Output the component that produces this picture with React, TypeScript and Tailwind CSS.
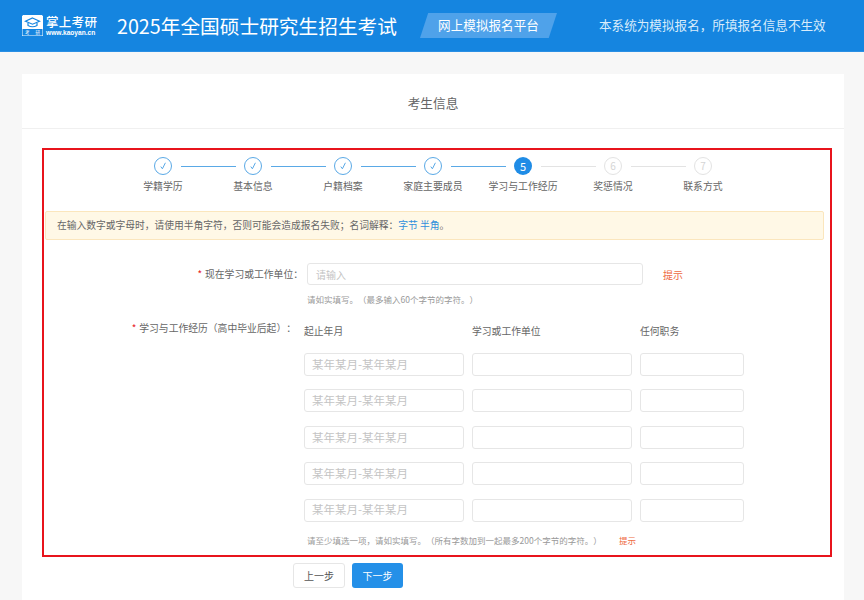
const steps = ["学籍学历", "基本信息", "户籍档案", "家庭主要成员", "学习与工作经历", "奖惩情况", "联系方式"];

function Logo() {
    return (
        <div className="flex items-center w-[75px] h-[22px]">
            <div className="relative w-[21px] h-[21px] shrink-0">
                <svg width="21" height="21" viewBox="0 0 21 21">
                    <path d="M3 0 H18 Q21 0 21 3 V20 Q21 21 20 21 H1 Q0 21 0 20 V3 Q0 0 3 0 Z" fill="none" stroke="#ffffff" strokeWidth="1" />
                    <path d="M3 0 H18 Q21 0 21 3 V14 H0 V3 Q0 0 3 0 Z" fill="#ffffff" />
                    <path d="M10.5 3 L17.5 6.2 L10.5 9.2 L3.5 6.2 Z" fill="none" stroke="#1585e0" strokeWidth="1.2" />
                    <path d="M6 8 V10.5 Q10.5 13 15 10.5 V8" fill="none" stroke="#1585e0" strokeWidth="1.2" />
                </svg>
                <div className="absolute left-0 right-0 bottom-[1px] flex justify-around text-[4.5px] leading-[6px] text-white">
                    <span>考</span>
                    <span>研</span>
                </div>
            </div>
            <div className="ml-[3px] flex flex-col">
                <span className="text-[12.5px] leading-[14px] font-medium text-white tracking-[0.3px] whitespace-nowrap">掌上考研</span>
                <span className="font-['Liberation_Sans',sans-serif] text-[6.6px] leading-[8px] font-bold text-white whitespace-nowrap">www.kaoyan.cn</span>
            </div>
        </div>
    );
}

function Tick() {
    return (
        <svg width="10" height="10" viewBox="0 0 10 10" fill="none" stroke="#5aa9e6" strokeWidth="1">
            <path d="M2.8 5.6 L4.4 7.8 L7.4 1.8" />
        </svg>
    );
}

function Stepper() {
    return (
        <div>
            <div className="flex items-center ml-[110px] mt-[7px]">
                {steps.map((_, i) => (
                    <div key={i} className="flex items-center">
                        {i < 4 && (
                            <div className="flex items-center justify-center w-[18px] h-[18px] rounded-full border border-[#5aa9e6]">
                                <Tick />
                            </div>
                        )}
                        {i === 4 && (
                            <div className="flex items-center justify-center w-[18px] h-[18px] rounded-full bg-[#1f8ce6] text-white text-[11px] leading-none">5</div>
                        )}
                        {i > 4 && (
                            <div className="flex items-center justify-center w-[18px] h-[18px] rounded-full border border-[#e3e3e3] text-[#d5d5d5] text-[10px] leading-none">{i + 1}</div>
                        )}
                        {i < 6 && (
                            <div className={`w-[55px] h-px mx-[8.5px] ${i < 4 ? "bg-[#5aa9e6]" : "bg-[#e3e3e3]"}`} />
                        )}
                    </div>
                ))}
            </div>
            <div className="flex ml-[74px] mt-[3px]">
                {steps.map((s) => (
                    <div key={s} className="w-[90px] text-center text-[9.9px] leading-[16px] text-[#666666] whitespace-nowrap">{s}</div>
                ))}
            </div>
        </div>
    );
}

function Row() {
    return (
        <div className="flex gap-[8px]">
            <div className="w-[160px] h-[23px] border border-[#e6e6e6] rounded-[3px] pl-[7px] flex items-center text-[11.5px] text-[#c4c4c4] whitespace-nowrap">某年某月-某年某月</div>
            <div className="w-[160px] h-[23px] border border-[#e6e6e6] rounded-[3px]" />
            <div className="w-[104px] h-[23px] border border-[#e6e6e6] rounded-[3px]" />
        </div>
    );
}

export default function App() {
    return (
        <div className="w-[864px] h-[600px] overflow-hidden bg-[#f7f7f7] [text-spacing-trim:space-all] font-['Noto_Sans_CJK_SC','Liberation_Sans',sans-serif]">
            <div className="flex items-center h-[52px] pl-[22px] bg-[#1585e0] border-b border-[#2a8fe4]">
                <Logo />
                <h1 className="ml-[20px] text-[19.7px] leading-[28px] font-normal text-white whitespace-nowrap">2025年全国硕士研究生招生考试</h1>
                <div className="ml-[23px] flex items-center justify-center w-[137px] h-[25px] bg-[#4fa2ea] [clip-path:polygon(6%_0,100%_0,94%_100%,0_100%)] text-[12.6px] text-white">网上模拟报名平台</div>
                <span className="ml-[42px] text-[12.6px] text-[#d8ecfb] whitespace-nowrap">本系统为模拟报名，所填报名信息不生效</span>
            </div>

            <div className="mx-[22px] mt-[22px] w-[822px] bg-white h-[526px]">
                <div className="flex items-center justify-center h-[55px] pt-[3px] border-b border-[#f0f0f0] text-[12.7px] text-[#666666]">考生信息</div>

                <div className="flex ml-[20px] mt-[19px] w-[790px] h-[409px] flex-col border-2 border-[#e8141c]">
                    <Stepper />

                    <div className="mt-[17px] ml-px w-[779px] h-[29px] flex items-center pl-[11px] bg-[#fff8e6] border border-[#fbe6bd] rounded-[2px] text-[9.75px] text-[#666666] whitespace-nowrap">
                        在输入数字或字母时，请使用半角字符，否则可能会造成报名失败；名词解释：
                        <span className="text-[#2f8fdc]">字节 半角</span>。
                    </div>

                    <div className="flex items-center mt-[23px]">
                        <div className="w-[259px] text-right text-[9.8px] text-[#666666] whitespace-nowrap">
                            <span className="text-[#e8141c] mr-[3px]">*</span>现在学习或工作单位：
                        </div>
                        <div className="ml-[4px] w-[336px] h-[22px] border border-[#e6e6e6] rounded-[3px] pl-[8px] flex items-center text-[10px] text-[#c4c4c4]">请输入</div>
                        <span className="ml-[20px] text-[10px] text-[#ee6a3f]">提示</span>
                    </div>
                    <div className="ml-[263px] mt-[7px] text-[8.5px] leading-[14px] text-[#999999] whitespace-nowrap">请如实填写。（最多输入60个字节的字符。）</div>

                    <div className="flex mt-[14px]">
                        <div className="w-[252px] text-right text-[9.8px] leading-[16px] text-[#666666] whitespace-nowrap">
                            <span className="text-[#e8141c] mr-[3px]">*</span>学习与工作经历（高中毕业后起）：
                        </div>
                        <div className="ml-[8px] flex flex-col">
                            <div className="flex gap-[8px] mt-[3px] text-[9.8px] leading-[16px] text-[#666666]">
                                <span className="w-[160px]">起止年月</span>
                                <span className="w-[160px]">学习或工作单位</span>
                                <span className="w-[104px]">任何职务</span>
                            </div>
                            <div className="flex flex-col gap-[13.4px] mt-[14px]">
                                <Row />
                                <Row />
                                <Row />
                                <Row />
                                <Row />
                            </div>
                            <div className="flex mt-[11px] ml-[3px] text-[8.5px] leading-[14px] whitespace-nowrap">
                                <span className="w-[312px] text-[#999999]">请至少填选一项，请如实填写。（所有字数加到一起最多200个字节的字符。）</span>
                                <span className="text-[#ee6a3f]">提示</span>
                            </div>
                        </div>
                    </div>
                </div>

                <div className="flex gap-[7px] ml-[271px] mt-[6px]">
                    <button className="w-[52px] h-[25px] bg-white border border-[#e6e6e6] rounded-[3px] text-[10px] text-[#555555]">上一步</button>
                    <button className="w-[51px] h-[25px] bg-[#2490e8] rounded-[3px] text-[10px] text-white">下一步</button>
                </div>
            </div>
        </div>
    );
}
